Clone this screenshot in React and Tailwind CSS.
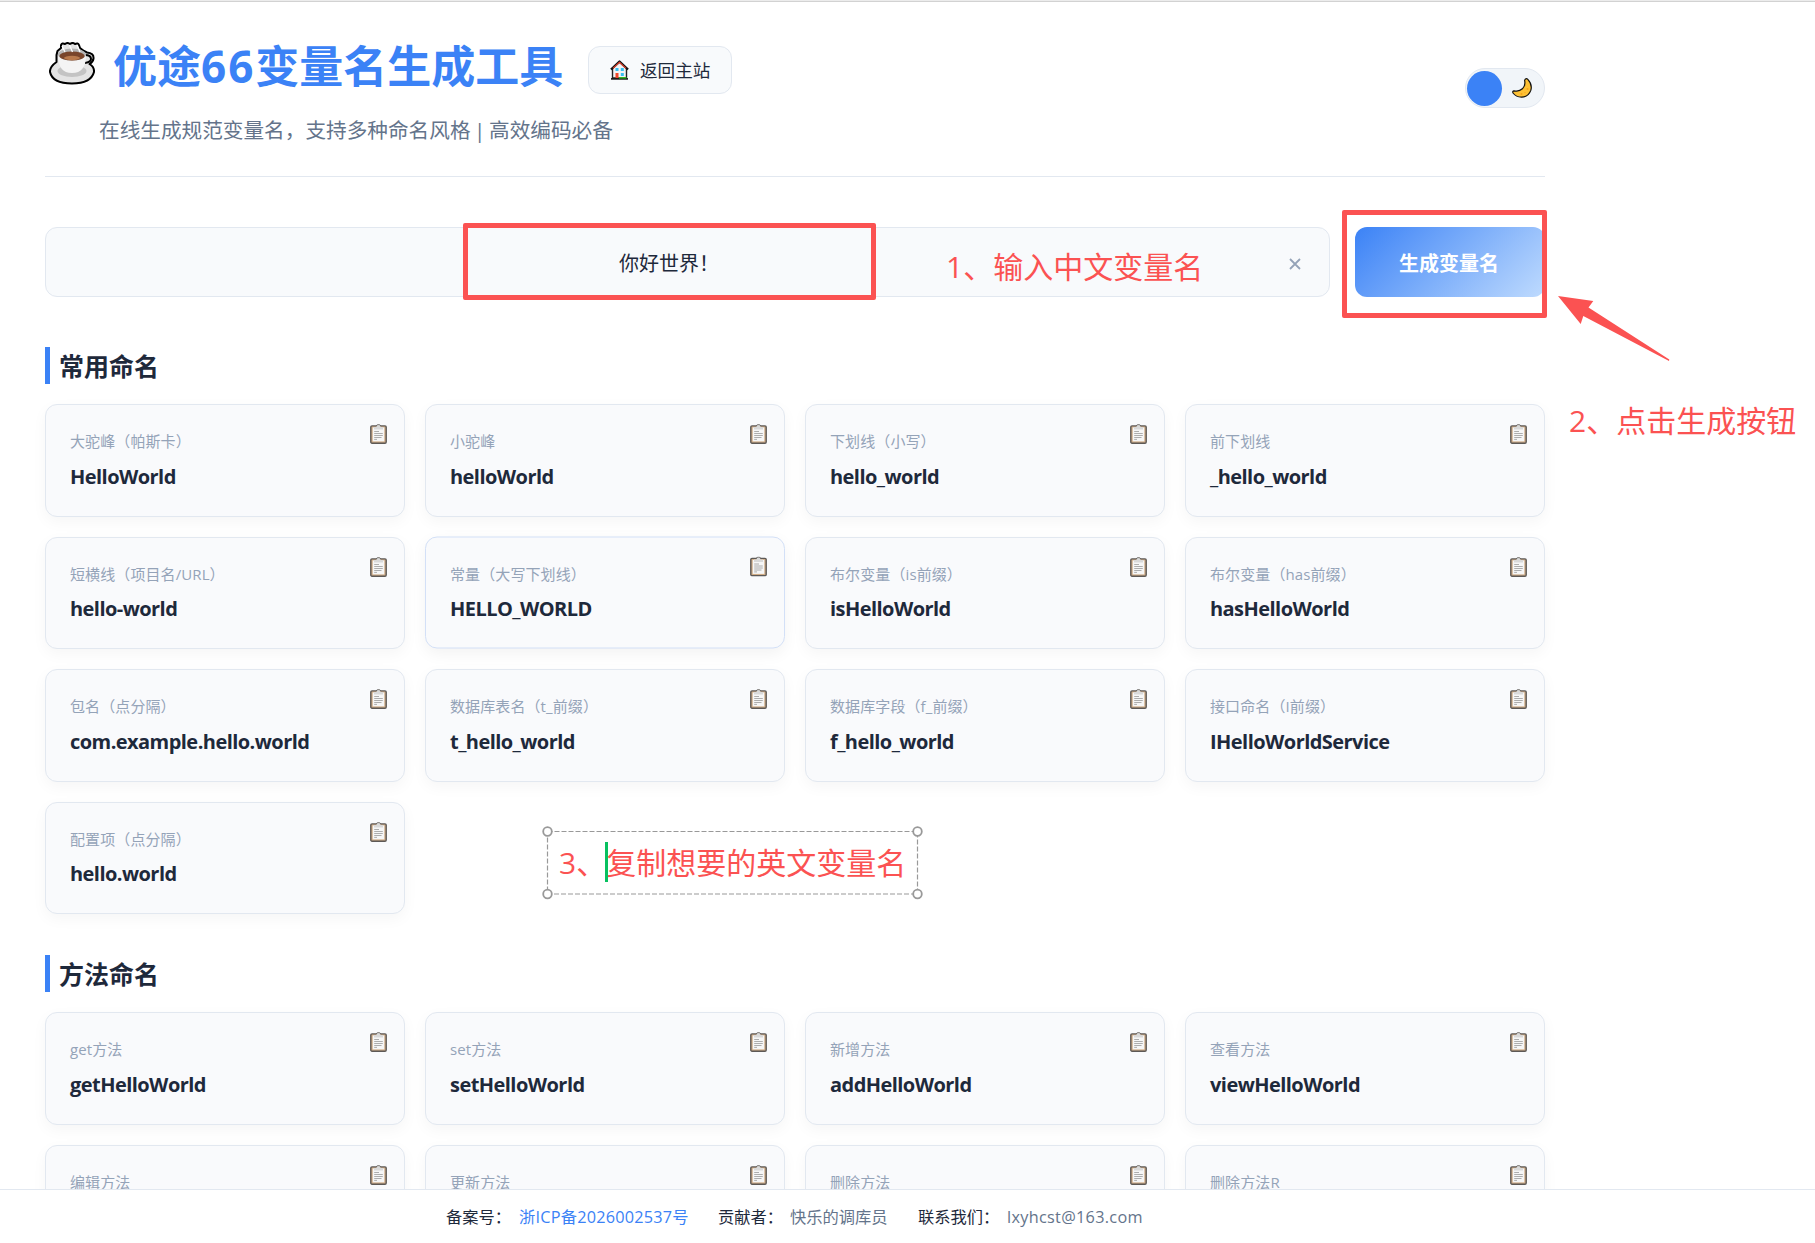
import { useState } from "react";

const commonNames = [
    { label: "大驼峰（帕斯卡）", value: "HelloWorld" },
    { label: "小驼峰", value: "helloWorld" },
    { label: "下划线（小写）", value: "hello_world" },
    { label: "前下划线", value: "_hello_world" },
    { label: "短横线（项目名/URL）", value: "hello-world" },
    { label: "常量（大写下划线）", value: "HELLO_WORLD", active: true },
    { label: "布尔变量（is前缀）", value: "isHelloWorld" },
    { label: "布尔变量（has前缀）", value: "hasHelloWorld" },
    { label: "包名（点分隔）", value: "com.example.hello.world" },
    { label: "数据库表名（t_前缀）", value: "t_hello_world" },
    { label: "数据库字段（f_前缀）", value: "f_hello_world" },
    { label: "接口命名（I前缀）", value: "IHelloWorldService" },
    { label: "配置项（点分隔）", value: "hello.world" },
];

const methodNames = [
    { label: "get方法", value: "getHelloWorld" },
    { label: "set方法", value: "setHelloWorld" },
    { label: "新增方法", value: "addHelloWorld" },
    { label: "查看方法", value: "viewHelloWorld" },
    { label: "编辑方法", value: "editHelloWorld" },
    { label: "更新方法", value: "updateHelloWorld" },
    { label: "删除方法", value: "deleteHelloWorld" },
    { label: "删除方法R", value: "removeHelloWorld" },
];

function CoffeeIcon() {
    return (
        <svg className="w-[46px] h-[43px] shrink-0" viewBox="0 0 46 43">
            <path
                d="M7.5 13 L8.5 9 L12 6 L12 3 Q13 0.5 16 2 Q18.5 0 21 2 Q24 0 26 2 Q29 0.5 30 3 L31 6 L35 9 L38 10.5 Q45 11 44.5 16.5 Q44 20 40.5 22 Q45.5 25 45 30 Q42 41.5 23 41.5 Q3.5 41.5 1 30 Q0.5 25 7.5 20 Z"
                fill="#e4e4e4"
                stroke="#000"
                strokeWidth="2"
                strokeLinejoin="round"
            />
            <ellipse cx="23" cy="29" rx="14.5" ry="6" fill="#c4c4c4" />
            <path d="M36 13 Q42 13 42 17 Q42 20 36 21" fill="none" stroke="#000" strokeWidth="2" />
            <path d="M9 13 Q9 31 23 31 Q37 31 37 13 Z" fill="#f4f4f4" />
            <ellipse cx="23" cy="12.5" rx="14" ry="6" fill="#b5b5b5" />
            <ellipse cx="23" cy="14" rx="12.5" ry="4.6" fill="#79452b" />
            <ellipse cx="23" cy="16" rx="8" ry="2.2" fill="#b97a4d" />
            <path d="M13 4 L16 10 M20.5 3 L23.5 10 M28 3 L31 10" stroke="#fff" strokeWidth="1.3" fill="none" />
        </svg>
    );
}

function HouseIcon() {
    return (
        <svg className="w-[19px] h-[20px] shrink-0" viewBox="0 0 19 20">
            <path d="M2.5 8.5 L9.5 2 L16.5 8.5 V18 H2.5 Z" fill="#f3f3f3" stroke="#222" strokeWidth="1.4" />
            <path d="M1 9.5 L9.5 1.5 L18 9.5" fill="none" stroke="#111" strokeWidth="2.4" strokeLinejoin="round" />
            <path d="M3 8.4 L9.5 2.4 L16 8.4" fill="none" stroke="#e8452f" strokeWidth="1.2" />
            <rect x="5.5" y="8" width="3" height="3" fill="#35c1f1" />
            <rect x="10.8" y="8" width="3" height="3" fill="#35c1f1" />
            <rect x="10.8" y="13" width="3" height="3" fill="#35c1f1" />
            <rect x="5.5" y="13" width="3" height="5.5" fill="#f0482a" />
            <path d="M1 18.9 H18" stroke="#111" strokeWidth="1.6" />
            <path d="M9 17.8 H16.5" stroke="#2fc21a" strokeWidth="1.4" />
        </svg>
    );
}

function MoonIcon() {
    return (
        <svg className="w-[20px] h-[20px]" viewBox="0 0 20 20">
            <path
                d="M13.2 1.2 Q14.6 0.2 15.8 1.4 Q20.6 6.4 18.8 12.4 Q16.4 19 9.6 19.2 Q4 19 1 15 Q0.2 13 2 12.8 Q7 14 10.4 10.8 Q13.8 7.4 12.6 2.4 Z"
                fill="#fdc135"
                stroke="#111"
                strokeWidth="1.2"
                strokeLinejoin="round"
            />
            <circle cx="15.5" cy="11" r="1" fill="#f5a31d" />
            <circle cx="9.5" cy="16" r="1.1" fill="#f5a31d" />
            <circle cx="13" cy="14.6" r="0.7" fill="#f5a31d" />
        </svg>
    );
}

function ClipboardIcon() {
    return (
        <svg className="w-[17px] h-[20px]" viewBox="0 0 17 20">
            <rect x="0.8" y="1.9" width="15.4" height="17.3" rx="1.2" fill="#d0ac86" stroke="#5d5956" strokeWidth="1.4" />
            <rect x="2.7" y="3.4" width="11.6" height="14" fill="#f6f6f6" />
            <path d="M4 5.4 V3 H6.4 Q6.8 0.6 8.5 0.6 Q10.2 0.6 10.6 3 H13 V5.4 Z" fill="#d9d9d9" />
            <path d="M6.2 1.7 Q7 0.6 8.5 0.6 Q10 0.6 10.8 1.7" fill="none" stroke="#5d5956" strokeWidth="0.9" />
            <path d="M4.2 7.5 H9 M4.2 9.5 H12.8 M4.2 11.5 H12.8 M4.2 13.5 H11.5 M4.2 15.4 H7" stroke="#9a9a9a" strokeWidth="0.8" />
        </svg>
    );
}

function NameCard({ item }) {
    return (
        <div
            className={
                item.active
                    ? "h-[112.5px] flex justify-between rounded-[12px] border border-[#d3e0f7] bg-[#f9fafc] pl-[24px] pr-[17px] shadow-[0_5px_15px_rgba(0,0,0,0.05)] -translate-y-[0.5px]"
                    : "h-[112.5px] flex justify-between rounded-[12px] border border-[#e2e8f0] bg-[#f9fafc] pl-[24px] pr-[17px] shadow-[0_5px_15px_rgba(0,0,0,0.04)]"
            }
        >
            <div className="pt-[24px]">
                <div className="h-[24px] leading-[24px] text-[15px] tracking-[0.1px] text-[#94a3b8]">{item.label}</div>
                <div className="mt-[7.5px] h-[32px] leading-[32px] text-[20px] font-bold tracking-[-0.55px] text-[#1e293b]">{item.value}</div>
            </div>
            <button className="mt-[19px] h-[20px]">
                <ClipboardIcon />
            </button>
        </div>
    );
}

function Section({ title, items }) {
    return (
        <section className="mb-[41px]">
            <h2 className="mb-[20px] h-[37px] border-l-[5px] border-[#3b82f6] pl-[9px] text-[25px] leading-[38px] font-bold text-[#1e293b]">{title}</h2>
            <div className="grid grid-cols-4 gap-[20px]">
                {items.map((item) => (
                    <NameCard key={item.value} item={item} />
                ))}
            </div>
        </section>
    );
}

// 教程标注：红框、箭头和步骤说明
function Annotations() {
    return (
        <div className="pointer-events-none text-[30px] leading-[40px] text-[#fb5252] whitespace-nowrap">
            <div className="absolute left-[463px] top-[223px] h-[77px] w-[413px] rounded-[2px] border-[5px] border-[#fb5252]" />
            <div className="absolute left-[1342px] top-[210px] h-[108px] w-[205px] rounded-[2px] border-[5px] border-[#fb5252]" />
            <p className="absolute left-[946px] top-[247px]">1、输入中文变量名</p>
            <svg className="absolute left-[1557px] top-[295px] h-[67px] w-[113px]" viewBox="0 0 113 67">
                <path d="M1 1 L36.3 6 L31.5 12.5 L112.3 64.5 L112 66 L26.3 21 L23.7 29 Z" fill="#fb5252" />
            </svg>
            <p className="absolute left-[1569px] top-[401px]">2、点击生成按钮</p>
            <div className="absolute left-[542px] top-[826px] h-[74px] w-[382px]">
                <svg className="absolute inset-0" width="382" height="74" viewBox="0 0 382 74" fill="none">
                    <rect x="5.5" y="5.5" width="370" height="62.5" stroke="#999" strokeWidth="1.2" strokeDasharray="5 2" />
                    <g fill="#fff" stroke="#999" strokeWidth="1.8">
                        <circle cx="5.5" cy="5.5" r="4.3" />
                        <circle cx="375.5" cy="5.5" r="4.3" />
                        <circle cx="5.5" cy="68" r="4.3" />
                        <circle cx="375.5" cy="68" r="4.3" />
                    </g>
                </svg>
                <p className="absolute left-[17px] top-[17px]">3、复制想要的英文变量名</p>
                <span className="absolute left-[63px] top-[16px] h-[40px] w-[3px] bg-[#07c160]" />
            </div>
        </div>
    );
}

function App() {
    const [text, setText] = useState("你好世界！");

    return (
        <div className="relative flex h-[1243px] w-[1815px] flex-col overflow-hidden bg-white font-['Open_Sans','Noto_Sans_CJK_SC',sans-serif] text-[#1e293b]">
            <div className="h-[2px] shrink-0 border-b border-[#d2d2d2] bg-[#ececec]" />
            <main className="min-h-0 flex-1 overflow-hidden pl-[45px]">
                <div className="w-[1500px]">
                    <header className="flex h-[175px] items-start justify-between border-b border-[#e2e8f0]">
                        <div className="pt-[34px]">
                            <div className="flex h-[60px] items-center">
                                <div className="-mt-[5px] ml-[4px]">
                                    <CoffeeIcon />
                                </div>
                                <h1 className="ml-[18px] w-[475px] text-[44px] leading-[60px] font-bold whitespace-nowrap text-[#3b82f6]">
                                    优途<span className="tracking-[2px]">66</span>变量名生成工具
                                </h1>
                                <a className="mt-[8px] flex h-[48px] w-[144px] items-center rounded-[12px] border border-[#e2e8f0] bg-[#f8fafc] pl-[21px] text-[17.6px]">
                                    <HouseIcon />
                                    <span className="ml-[11px]">返回主站</span>
                                </a>
                            </div>
                            <p className="mt-[19px] pl-[54px] text-[20.65px] leading-[30px] [word-spacing:-1.8px] text-[#64748b]">在线生成规范变量名，支持多种命名风格 | 高效编码必备</p>
                        </div>
                        <button className="mt-[66px] flex h-[40px] w-[80px] items-center justify-between rounded-full border border-[#e2e8f0] bg-[#f1f5f9] pl-px pr-[12px]">
                            <span className="h-[35px] w-[35px] rounded-full bg-[#3b82f6]" />
                            <MoonIcon />
                        </button>
                    </header>

                    <div className="mt-[50px] mb-[50px] flex h-[70px] gap-[25px]">
                        <div className="flex flex-1 items-center rounded-[12px] border border-[#e2e8f0] bg-[#f8fafc] pl-[24px] pr-[28px]">
                            <input
                                type="text"
                                value={text}
                                onChange={(e) => setText(e.target.value)}
                                className="min-w-0 flex-1 bg-transparent pt-[3px] pr-[21px] text-center text-[20px] outline-none"
                            />
                            <button className="mt-[3px] flex h-[12px] w-[12px] items-center justify-center text-[#94a3b8]" onClick={() => setText("")}>
                                <svg width="12" height="12" viewBox="0 0 12 12">
                                    <path d="M1 1 L11 11 M11 1 L1 11" stroke="currentColor" strokeWidth="1.8" />
                                </svg>
                            </button>
                        </div>
                        <button className="w-[190px] rounded-[12px] bg-[linear-gradient(135deg,#3b82f6,#bfdbfe)] pt-[3px] pr-[2px] text-[20px] font-bold text-white">生成变量名</button>
                    </div>

                    <Section title="常用命名" items={commonNames} />
                    <Section title="方法命名" items={methodNames} />
                </div>
            </main>
            <footer className="flex h-[54px] shrink-0 items-center border-t border-[#e2e8f0] bg-white pt-[2px] pl-[446px] text-[16.25px] whitespace-nowrap">
                <span className="w-[73px]">备案号：</span>
                <a className="w-[199px] tracking-[0.22px] text-[#3b82f6]">浙ICP备2026002537号</a>
                <span className="w-[72px]">贡献者：</span>
                <span className="w-[128px] text-[#64748b]">快乐的调库员</span>
                <span className="w-[89px]">联系我们：</span>
                <span className="tracking-[0.3px] text-[#64748b]">lxyhcst@163.com</span>
            </footer>
            <Annotations />
        </div>
    );
}

export default App;
